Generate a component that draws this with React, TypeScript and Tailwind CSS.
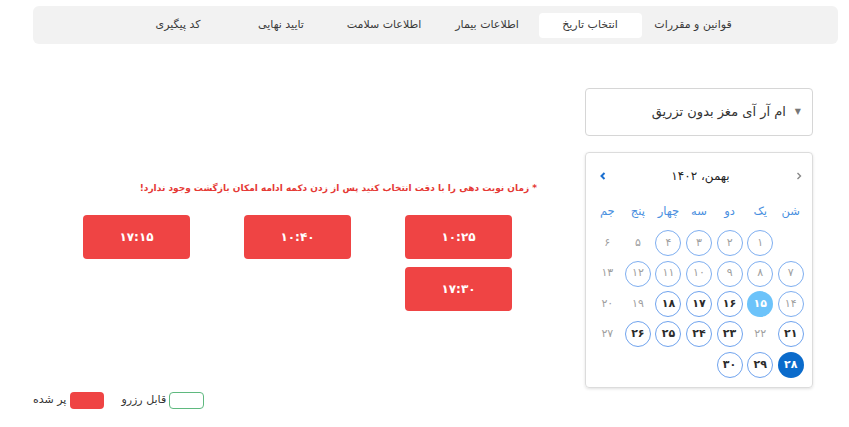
import React from "react";

const tabs = [
  { label: "قوانین و مقررات", active: false },
  { label: "انتخاب تاریخ", active: true },
  { label: "اطلاعات بیمار", active: false },
  { label: "اطلاعات سلامت", active: false },
  { label: "تایید نهایی", active: false },
  { label: "کد پیگیری", active: false },
];

type Day = { t: string; k: "empty" | "plain" | "past" | "avail" | "today" | "sel" };

const rows: Day[][] = [
  [
    { t: "", k: "empty" },
    { t: "۱", k: "past" },
    { t: "۲", k: "past" },
    { t: "۳", k: "past" },
    { t: "۴", k: "past" },
    { t: "۵", k: "plain" },
    { t: "۶", k: "plain" },
  ],
  [
    { t: "۷", k: "past" },
    { t: "۸", k: "past" },
    { t: "۹", k: "past" },
    { t: "۱۰", k: "past" },
    { t: "۱۱", k: "past" },
    { t: "۱۲", k: "past" },
    { t: "۱۳", k: "plain" },
  ],
  [
    { t: "۱۴", k: "past" },
    { t: "۱۵", k: "today" },
    { t: "۱۶", k: "avail" },
    { t: "۱۷", k: "avail" },
    { t: "۱۸", k: "avail" },
    { t: "۱۹", k: "plain" },
    { t: "۲۰", k: "plain" },
  ],
  [
    { t: "۲۱", k: "avail" },
    { t: "۲۲", k: "plain" },
    { t: "۲۳", k: "avail" },
    { t: "۲۴", k: "avail" },
    { t: "۲۵", k: "avail" },
    { t: "۲۶", k: "avail" },
    { t: "۲۷", k: "plain" },
  ],
  [
    { t: "۲۸", k: "sel" },
    { t: "۲۹", k: "avail" },
    { t: "۳۰", k: "avail" },
    { t: "", k: "empty" },
    { t: "", k: "empty" },
    { t: "", k: "empty" },
    { t: "", k: "empty" },
  ],
];

const weekdays = ["شن", "یک", "دو", "سه", "چهار", "پنج", "جم"];

function DayCell({ d }: { d: Day }) {
  let cls = "";
  switch (d.k) {
    case "empty":
      return <div className="h-[30.4px]" />;
    case "plain":
      cls = "text-[#a0a0a0]";
      break;
    case "past":
      cls = "border border-[#7eaef0] text-[#a0a0a0]";
      break;
    case "avail":
      cls = "border border-[#6fa3ee] text-[#2b2b2b] font-bold";
      break;
    case "today":
      cls = "bg-[#6cc3fa] text-white font-bold";
      break;
    case "sel":
      cls = "bg-[#0b6bcb] text-white font-bold";
      break;
  }
  return (
    <div className="h-[30.4px] flex items-center justify-center">
      <div className={`w-[26px] h-[26px] rounded-full flex items-center justify-center text-[11px] ${cls}`}>
        {d.t}
      </div>
    </div>
  );
}

export default function App() {
  return (
    <div className="w-[849px] h-[427px] bg-white overflow-hidden font-['DejaVu_Sans',sans-serif]" dir="rtl">
      {/* Top tabs bar */}
      <div className="mt-[6px] ml-[33px] mr-[11px] h-[38px] bg-[#f2f2f2] rounded-md flex items-center justify-center">
        {tabs.map((t) => (
          <div
            key={t.label}
            className={`w-[103px] h-[25px] flex items-center justify-center text-[11px] text-[#3a3a3a] rounded ${
              t.active ? "bg-white" : ""
            }`}
          >
            {t.label}
          </div>
        ))}
      </div>

      {/* Main */}
      <div className="flex mt-[44px] mr-[36px]">
        {/* Right column */}
        <div className="w-[228px] flex flex-col">
          <div className="h-[48px] border border-[#d6d6d6] rounded flex items-center pr-[11px] gap-[9px] text-[13px] text-[#333]">
            <span className="text-[8px] text-[#777]">▼</span>
            <span>ام آر آی مغز بدون تزریق</span>
          </div>
          <div className="mt-[16px] h-[236px] border border-[#dcdcdc] rounded shadow-[0_1px_3px_rgba(0,0,0,0.12)] pt-[11px]">
            <div className="h-[24px] flex items-center justify-between px-[8px]">
              <svg width="10" height="10" viewBox="0 0 10 10" className="ml-[1px]">
                <path d="M3.5 2 L6.5 5 L3.5 8" stroke="#888" strokeWidth="1.4" fill="none" />
              </svg>
              <span className="text-[12px] text-[#222]">بهمن، ۱۴۰۲</span>
              <svg width="10" height="10" viewBox="0 0 10 10" className="ml-[4px]">
                <path d="M6.5 2 L3.5 5 L6.5 8" stroke="#1a6fd0" strokeWidth="2" fill="none" />
              </svg>
            </div>
            <div className="w-[214px] mx-auto mt-[12px] grid grid-cols-7 h-[24px] items-center">
              {weekdays.map((w) => (
                <div key={w} className="text-center text-[11.5px] text-[#4a8fe0]">
                  {w}
                </div>
              ))}
            </div>
            <div className="w-[214px] mx-auto mt-[4px] grid grid-cols-7">
              {rows.flat().map((d, i) => (
                <DayCell key={i} d={d} />
              ))}
            </div>
          </div>
        </div>

        {/* Left column */}
        <div className="flex-1 pt-[94px] pr-[48px]">
          <div className="text-[9px] font-bold text-[#e53935] leading-[12px]">
            * زمان نوبت دهی را با دقت انتخاب کنید پس از زدن دکمه ادامه امکان بازگشت وجود ندارد!
          </div>
          <div className="mt-[21px] mr-[25px] grid grid-cols-[107px_107px_107px] gap-x-[54px] gap-y-[8px] w-max">
            {["۱۰:۲۵", "۱۰:۴۰", "۱۷:۱۵", "۱۷:۳۰"].map((t) => (
              <div
                key={t}
                className="h-[44px] bg-[#ef4444] rounded-[4px] flex items-center justify-center text-white text-[12px] font-bold"
              >
                {t}
              </div>
            ))}
          </div>
        </div>
      </div>

      {/* Legend */}
      <div className="mt-[4px] ml-[33px] flex justify-end items-center text-[11px] text-[#333]">
        <div className="w-[35px] h-[17px] border border-[#5fb97f] rounded-[4px]" />
        <span className="mr-[3px]">قابل رزرو</span>
        <div className="w-[34px] h-[17px] bg-[#ef4444] rounded-[4px] mr-[17px]" />
        <span className="mr-[4px]">پر شده</span>
      </div>
    </div>
  );
}
